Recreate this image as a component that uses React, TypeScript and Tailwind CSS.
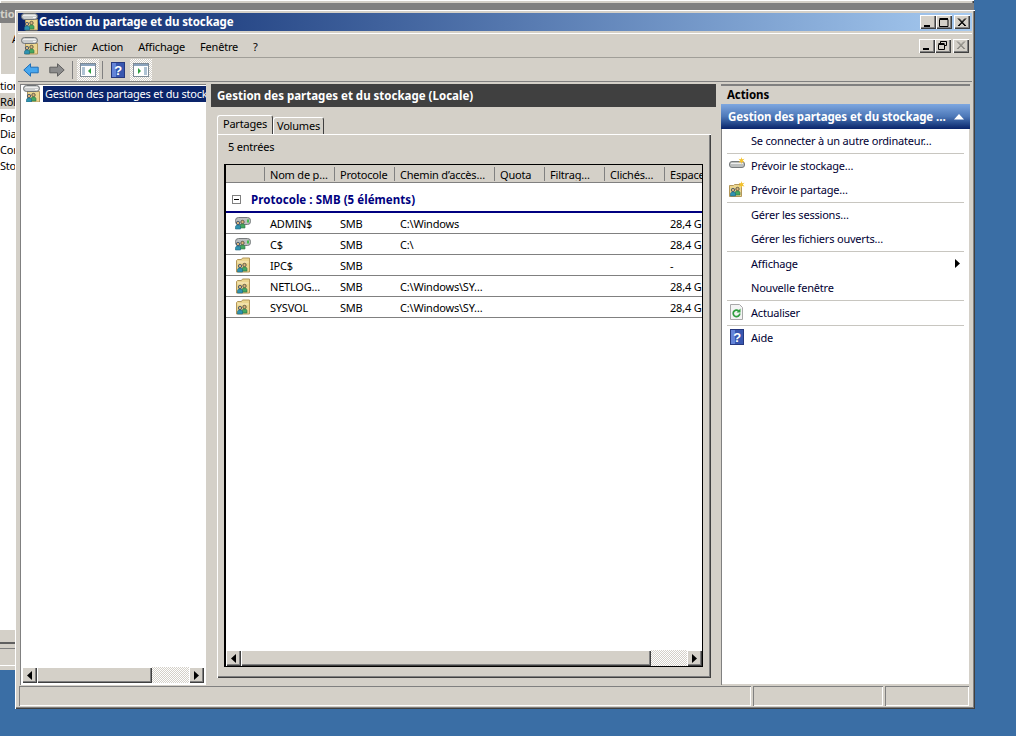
import type { ReactNode } from 'react';

const raised = 'shadow-[inset_1px_1px_0_#ffffff,inset_-1px_-1px_0_#404040,inset_-2px_-2px_0_#808080]';
const sunken = 'shadow-[inset_1px_1px_0_#808080,inset_-1px_-1px_0_#ffffff]';
const dither = 'bg-[repeating-conic-gradient(#ffffff_0_25%,#d4d0c8_0_50%)] bg-[length:2px_2px]';

// deux petits personnages, communs a toutes les icones de partage
const Users = ({ x, y }: { x: number; y: number }) => (
  <g transform={`translate(${x} ${y})`}>
    <circle cx="7.500" cy="2" r="1.700" fill="#d8b27a" stroke="#4a4a3a" strokeWidth="0.800" />
    <path d="M5 8V5.800C5 4.600 6 4 7.500 4S10 4.600 10 5.800V8z" fill="#45a860" stroke="#2f6f45" strokeWidth="0.600" />
    <circle cx="3" cy="3" r="1.700" fill="#d8b27a" stroke="#2f4a6a" strokeWidth="0.800" />
    <path d="M.500 9V6.800C.500 5.600 1.500 5 3 5s2.500.6 2.500 1.800V9z" fill="#2f93b0" stroke="#1f6480" strokeWidth="0.600" />
  </g>
);

const ShareIcon = () => (
  <svg width="16" height="16" viewBox="0 0 16 16" className="shrink-0">
    <path d="M1.500 3.500l1-1h4l1-1.500h7v14h-13z" fill="#ecd68f" stroke="#b3975a" />
    <path d="M2.500 4.500h11v1h-11z" fill="#f8edc4" />
    <Users x={2} y={6} />
  </svg>
);

const DriveIcon = () => (
  <svg width="16" height="16" viewBox="0 0 16 16" className="shrink-0">
    <rect x="0.500" y="2.500" width="15" height="7" rx="3" fill="#bcbfbf" stroke="#777b7d" />
    <rect x="12" y="4.500" width="2" height="3" fill="#3fc04a" />
    <Users x={0} y={5} />
  </svg>
);

const MainIcon = () => (
  <svg width="18" height="18" viewBox="0 0 18 18" className="shrink-0">
    <path d="M4.500 6.500h12v10.500h-12z" fill="#ecd68f" stroke="#b3975a" />
    <rect x="0.500" y="0.500" width="16" height="6" rx="3" fill="#c9cccc" stroke="#6f7375" />
    <rect x="2" y="2" width="13" height="1" fill="#eeeeee" />
    <rect x="12" y="4" width="3" height="1" fill="#f6f6f6" />
    <Users x={3} y={8} />
  </svg>
);

const NewDriveIcon = () => (
  <svg width="16" height="16" viewBox="0 0 16 16" className="shrink-0">
    <rect x="0.500" y="4.500" width="15" height="6" rx="2.500" fill="#bcbfbf" stroke="#777b7d" />
    <rect x="2" y="6" width="12" height="1" fill="#eeeeee" />
    <path d="M12.500 0l.6 2.200 2.400-.4-1.700 1.800 1.700 1.800-2.400-.4-.6 2.200-.6-2.200-2.400.4 1.700-1.800-1.700-1.800 2.400.4z" fill="#f3c22f" />
  </svg>
);

const NewShareIcon = () => (
  <svg width="16" height="16" viewBox="0 0 16 16" className="shrink-0">
    <path d="M.500 4.500h4l1-1h7v12H.500z" fill="#ecd68f" stroke="#b3975a" />
    <Users x={1} y={6} />
    <path d="M12.500 0l.6 2.200 2.400-.4-1.700 1.800 1.700 1.800-2.400-.4-.6 2.200-.6-2.200-2.400.4 1.700-1.800-1.700-1.800 2.400.4z" fill="#f3c22f" />
  </svg>
);

const RefreshIcon = () => (
  <svg width="16" height="16" viewBox="0 0 16 16" className="shrink-0">
    <path d="M1.500 .500h9l3 3v12h-12z" fill="#f4f4f4" stroke="#a8a8a8" />
    <path d="M10.800 9.500a3.300 3.300 0 1 1-1.100-2.600" fill="none" stroke="#2f9e3f" strokeWidth="1.700" />
    <path d="M11.500 4.500v4h-4z" fill="#2f9e3f" />
  </svg>
);

const HelpIcon = () => (
  <svg width="14" height="16" viewBox="0 0 14 16" className="shrink-0">
    <rect x="0.500" y="0.500" width="13" height="15" fill="#3857b0" stroke="#27397f" />
    <rect x="1" y="1" width="4" height="14" fill="#6484d8" />
    <text x="7" y="13" textAnchor="middle" fontSize="13" fontWeight="700" fill="#ffffff" fontFamily="Liberation Sans, sans-serif">?</text>
  </svg>
);

const Arrow = ({ dir, fill, stroke }: { dir: 'left' | 'right'; fill: string; stroke: string }) => (
  <svg width="16" height="14" viewBox="0 0 16 14" className={dir === 'right' ? 'scale-x-[-1]' : ''}>
    <path d="M.8 7L7.500.8v3.400h7.700v5.600H7.500v3.400z" fill={fill} stroke={stroke} />
  </svg>
);

const PaneIcon = ({ right }: { right?: boolean }) => (
  <svg width="16" height="14" viewBox="0 0 16 14">
    <rect x="0.500" y="0.500" width="15" height="13" fill="#ffffff" stroke="#7d8a96" />
    <rect x="1" y="1" width="14" height="2" fill="#8aa3bd" />
    {right ? (
      <path d="M11 5h3M11 7h3M11 9h3M11 11h3" stroke="#5f86a8" />
    ) : (
      <path d="M2 5h3M2 7h3M2 9h3M2 11h3" stroke="#5f86a8" />
    )}
    {right ? <path d="M5 5v6l3-3z" fill="#2f9e3f" /> : <path d="M11 5v6L8 8z" fill="#2f9e3f" />}
  </svg>
);

const Tri = ({ dir }: { dir: 'left' | 'right' }) => (
  <svg width="5" height="9" viewBox="0 0 5 9">
    <path d={dir === 'left' ? 'M5 0v9L0 4.500z' : 'M0 0v9l5-4.500z'} fill="#000000" />
  </svg>
);

const CaptionBtn = ({ kind, disabled }: { kind: 'min' | 'max' | 'restore' | 'close'; disabled?: boolean }) => {
  const c = disabled ? '#8c8a84' : '#000000';
  return (
    <div className={`flex h-[14px] w-[16px] items-center justify-center bg-[#d4d0c8] ${raised}`}>
      <svg width="10" height="9" viewBox="0 0 10 9">
        {kind === 'min' && <path d="M1 7h6v2H1z" fill={c} />}
        {kind === 'max' && <path d="M.500 1.500h8.500v7H.500zM.500 .500h8.500" fill="none" stroke={c} />}
        {kind === 'restore' && <path d="M2.500 2.500V.500h6v4H6.500M.500 3.500h6v5h-6zM.500 2.500h6M2.500 0h6" fill="none" stroke={c} />}
        {kind === 'close' && <path d="M1 .500l7 7.500M2 .500l7 7.500M8 .500L1 8M9 .500L2 8" fill="none" stroke={c} />}
      </svg>
    </div>
  );
};

const Scrollbar = ({ thumb, fill }: { thumb: string; fill: string }) => (
  <div className="flex h-full">
    <div className={`flex w-[15px] shrink-0 items-center justify-center bg-[#d4d0c8] ${raised}`}><Tri dir="left" /></div>
    <div className={`${thumb} shrink-0 bg-[#d4d0c8] ${raised}`} />
    <div className={`${fill} ${dither}`} />
    <div className={`flex w-[15px] shrink-0 items-center justify-center bg-[#d4d0c8] ${raised}`}><Tri dir="right" /></div>
  </div>
);

const columns = [
  { label: 'Nom de p…', width: 'w-[70px]' },
  { label: 'Protocole', width: 'w-[60px]' },
  { label: 'Chemin d’accès…', width: 'w-[100px]' },
  { label: 'Quota', width: 'w-[50px]' },
  { label: 'Filtrag…', width: 'w-[60px]' },
  { label: 'Clichés…', width: 'w-[60px]' },
  { label: 'Espace', width: 'w-[40px]' },
];

const shares = [
  { name: 'ADMIN$', path: 'C:\\Windows', free: '28,4 G', drive: true },
  { name: 'C$', path: 'C:\\', free: '28,4 G', drive: true },
  { name: 'IPC$', path: '', free: '-', drive: false },
  { name: 'NETLOG…', path: 'C:\\Windows\\SY…', free: '28,4 G', drive: false },
  { name: 'SYSVOL', path: 'C:\\Windows\\SY…', free: '28,4 G', drive: false },
];

const ActionRow = ({ icon, label, children }: { icon?: ReactNode; label: string; children?: ReactNode }) => (
  <div className="flex h-[24px] items-center pb-[2px]">
    <div className="flex w-[30px] shrink-0 justify-center pl-[2px]">{icon}</div>
    <span className="text-[#000033]">{label}</span>
    {children}
  </div>
);

const ActionSep = () => <div className="mx-[6px] h-px bg-[#c8c6c0]" />;

const App = () => {
  return (
    <div className="relative h-[736px] w-[1016px] overflow-hidden bg-[#3a6ea5] font-['Noto_Sans',sans-serif] text-[11px] leading-none tracking-[-0.2px] text-black">
      {/* fenetre derriere */}
      <div className={`absolute left-0 top-0 flex h-[670px] w-[974px] flex-col overflow-hidden bg-[#d4d0c8] ${raised}`}>
        <div className="mt-[3px] h-[20px] bg-[#808080] pt-[5px] font-bold text-[#d4d0c8]">tion</div>
        <div className="h-[51px] pl-[12px] pt-[10px]">A</div>
        <div className="flex flex-1 flex-col bg-white pt-[3px]">
          {['tion', 'Rôl', 'For', 'Dia', 'Cor', 'Sto'].map((t, i) => (
            <div key={t} className={`h-[16px] pt-[3px] ${i === 1 ? 'bg-[#d4d0c8]' : ''}`}>{t}</div>
          ))}
        </div>
        <div className="h-[12px] bg-[#d4d0c8]" />
        <div className="h-[6px] border-t-2 border-[#606060] bg-[#d4d0c8]" />
        <div className="h-[17px] border-t border-[#808080] bg-[#d4d0c8]" />
        <div className="h-[5px] border-t border-white bg-[#d4d0c8]" />
      </div>

      {/* fenetre principale */}
      <div className={`absolute left-[15px] top-[10px] flex h-[699px] w-[960px] flex-col bg-[#d4d0c8] p-[3px] ${raised}`}>
        <div className="flex h-[18px] shrink-0 items-center bg-gradient-to-r from-[#0a246a] to-[#a6caf0] pl-[3px] pr-[2px]">
          <MainIcon />
          <span className="flex-1 text-[11.500px] font-bold tracking-[-0.1px] text-white">Gestion du partage et du stockage</span>
          <div className="flex gap-[2px]">
            <div className="flex"><CaptionBtn kind="min" /><CaptionBtn kind="max" /></div>
            <CaptionBtn kind="close" />
          </div>
        </div>

        <div className="mt-[2px] flex h-[25px] shrink-0 items-center border-y border-b-[#a09e98] border-t-white px-[3px]">
          <MainIcon />
          <div className="ml-[5px] flex flex-1 gap-[15px] pt-[1px]">
            {['Fichier', 'Action', 'Affichage', 'Fenêtre', '?'].map((m) => <span key={m}>{m}</span>)}
          </div>
          <div className="flex gap-[2px]">
            <div className="flex"><CaptionBtn kind="min" /><CaptionBtn kind="restore" /></div>
            <CaptionBtn kind="close" disabled />
          </div>
        </div>

        <div className="flex h-[24px] shrink-0 items-center gap-[3px] border-b border-[#808080] pl-[5px]">
          <Arrow dir="left" fill="#48a7ee" stroke="#1d6fb8" />
          <div className="w-[4px]" />
          <Arrow dir="right" fill="#8c8c8c" stroke="#5f5f5f" />
          <div className="ml-[4px] h-[18px] w-px bg-[#808080]" />
          <div className={`ml-[1px] flex h-[22px] w-[22px] items-center justify-center ${dither}`}><PaneIcon /></div>
          <div className="h-[18px] w-px bg-[#808080]" />
          <div className="ml-[5px]"><HelpIcon /></div>
          <div className={`ml-[2px] flex h-[22px] w-[22px] items-center justify-center ${dither}`}><PaneIcon right /></div>
        </div>

        <div className="flex min-h-0 flex-1 pl-[2px] pr-[1px] pt-[2px]">
          {/* arbre */}
          <div className="flex w-[186px] shrink-0 flex-col bg-white shadow-[inset_1px_1px_0_#808080,inset_-1px_-1px_0_#ffffff]">
            <div className="flex h-[18px] items-center overflow-hidden whitespace-nowrap pl-[3px] pt-[1px]">
              <MainIcon />
              <span className="ml-[2px] flex h-[16px] flex-1 items-center overflow-hidden bg-[#0a246a] pl-[2px] text-white">Gestion des partages et du stockage</span>
            </div>
            <div className="flex-1" />
            <div className="mb-[2px] h-[16px] px-[2px]">
              <Scrollbar thumb="w-[115px]" fill="w-[37px]" />
            </div>
          </div>

          {/* centre */}
          <div className="ml-[5px] flex w-[505px] shrink-0 flex-col">
            <div className="flex h-[23px] shrink-0 items-center bg-[#404040] pl-[6px] text-[11.500px] font-bold tracking-[0px] text-white">Gestion des partages et du stockage (Locale)</div>
            <div className="flex min-h-0 flex-1 flex-col pb-[7px] pl-[6px] pr-[5px] pt-[8px]">
              <div className="flex h-[19px] shrink-0 items-end">
                <div className="relative z-10 flex h-[19px] w-[56px] items-center justify-center rounded-t-[3px] border-x border-t border-l-white border-r-[#404040] border-t-white pb-[3px]">Partages</div>
                <div className="flex h-[17px] w-[51px] items-center justify-center rounded-t-[3px] border-x border-t border-l-white border-r-[#404040] border-t-white pb-[1px]">Volumes</div>
              </div>
              <div className={`flex min-h-0 flex-1 flex-col pb-[11px] pl-[7px] pr-[8px] ${raised}`}>
                <div className="h-[30px] shrink-0 pl-[4px] pt-[7px]">5 entrées</div>
                <div className="flex min-h-0 flex-1 flex-col border border-l-2 border-black bg-white">
                  <div className="flex h-[18px] shrink-0 items-center overflow-hidden whitespace-nowrap border-b border-[#808080] bg-[#d4d0c8] pt-[1px]">
                    <div className="w-[38px] shrink-0" />
                    {columns.map((c) => (
                      <div key={c.label} className={`${c.width} flex h-[14px] shrink-0 items-center overflow-hidden border-l border-[#808080] pl-[5px]`}>{c.label}</div>
                    ))}
                  </div>
                  <div className="flex h-[30px] shrink-0 items-center border-b-2 border-[#000080] pl-[6px] pt-[5px]">
                    <div className="flex h-[9px] w-[9px] items-center justify-center border border-[#808080]"><div className="h-px w-[5px] bg-black" /></div>
                    <span className="ml-[10px] text-[11.500px] font-bold tracking-[0.05px] text-[#000080]">Protocole : SMB (5 éléments)</span>
                  </div>
                  {shares.map((s) => (
                    <div key={s.name} className="flex h-[21px] shrink-0 items-center overflow-hidden whitespace-nowrap border-b border-[#808080]">
                      <div className="flex w-[39px] shrink-0 justify-end pr-[14px]">{s.drive ? <DriveIcon /> : <ShareIcon />}</div>
                      <div className="w-[70px] shrink-0 pl-[5px]">{s.name}</div>
                      <div className="w-[60px] shrink-0 pl-[5px]">SMB</div>
                      <div className="w-[270px] shrink-0 pl-[5px]">{s.path}</div>
                      <div className="shrink-0 pl-[5px]">{s.free}</div>
                    </div>
                  ))}
                  <div className="flex-1" />
                  <div className="h-[16px] shrink-0">
                    <Scrollbar thumb="w-[410px]" fill="w-[36px]" />
                  </div>
                </div>
              </div>
            </div>
          </div>

          {/* actions */}
          <div className="ml-[5px] flex w-[249px] shrink-0 flex-col bg-white shadow-[inset_1px_0_0_#808080,inset_-1px_0_0_#d4d0c8,inset_0_-1px_0_#d4d0c8]">
            <div className="flex h-[20px] shrink-0 items-center border-t-2 border-[#808080] bg-[#d4d0c8] pl-[6px] text-[11.500px] font-bold tracking-[-0.1px]">Actions</div>
            <div className="flex h-[25px] shrink-0 items-center bg-gradient-to-b from-[#7ea7e0] via-[#4d78b8] to-[#0a246a] pl-[7px] pr-[6px]">
              <span className="flex-1 text-[11.500px] font-bold tracking-[-0.1px] text-white">Gestion des partages et du stockage …</span>
              <svg width="10" height="6" viewBox="0 0 10 6"><path d="M5 0l5 5.500H0z" fill="#ffffff" /></svg>
            </div>
            <ActionRow label="Se connecter à un autre ordinateur…" />
            <ActionSep />
            <ActionRow icon={<NewDriveIcon />} label="Prévoir le stockage…" />
            <ActionRow icon={<NewShareIcon />} label="Prévoir le partage…" />
            <ActionSep />
            <ActionRow label="Gérer les sessions…" />
            <ActionRow label="Gérer les fichiers ouverts…" />
            <ActionSep />
            <ActionRow label="Affichage">
              <div className="ml-auto mr-[10px]"><Tri dir="right" /></div>
            </ActionRow>
            <ActionRow label="Nouvelle fenêtre" />
            <ActionSep />
            <ActionRow icon={<RefreshIcon />} label="Actualiser" />
            <ActionSep />
            <ActionRow icon={<HelpIcon />} label="Aide" />
          </div>
        </div>

        <div className="mt-px flex h-[20px] shrink-0 gap-[2px] pl-px pr-[3px]">
          <div className={`w-[732px] ${sunken}`} />
          <div className={`w-[130px] ${sunken}`} />
          <div className={`flex-1 ${sunken}`} />
        </div>
      </div>
    </div>
  );
};

export default App;
